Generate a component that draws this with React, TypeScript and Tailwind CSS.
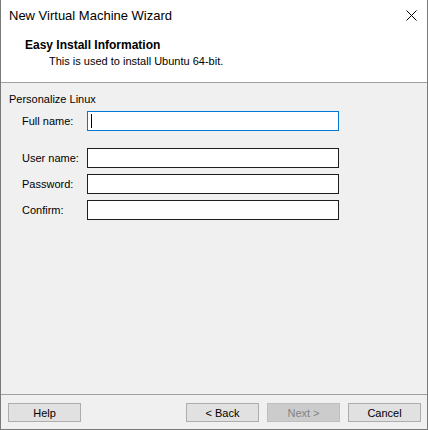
import React from 'react';

const font = { fontFamily: '"Liberation Sans", Arial, sans-serif' };

const Field: React.FC<{ label: string; focused?: boolean; className?: string }> = ({ label, focused, className }) => (
  <div className={`flex items-center ${className ?? ''}`}>
    <div className="w-[65px] text-[11px] leading-[16px] text-black">{label}</div>
    <div
      className={`relative h-[20px] w-[252px] bg-white border ${
        focused ? 'border-[#0078d7]' : 'border-[#1e1e1e]'
      }`}
    >
      {focused && <div className="absolute left-[3px] top-[2px] h-[14px] w-px bg-black" />}
    </div>
  </div>
);

const Button: React.FC<{ label: string; disabled?: boolean }> = ({ label, disabled }) => (
  <button
    className={`h-[19px] w-[73px] border text-[11px] leading-[16px] ${
      disabled
        ? 'bg-[#cccccc] border-[#bfbfbf] text-[#838383]'
        : 'bg-[#e1e1e1] border-[#adadad] text-black'
    }`}
  >
    {label}
  </button>
);

export default function App() {
  return (
    <div
      className="flex h-[430px] w-[428px] flex-col border-x border-b border-[#7a7a7a] bg-white select-none"
      style={font}
    >
      {/* title bar */}
      <div className="flex h-[31px] items-center justify-between pl-[8px] pr-[10px]">
        <span className="text-[13px] text-black">New Virtual Machine Wizard</span>
        <svg width="11" height="11" viewBox="0 0 11 11" className="mt-[-1px]">
          <path d="M0.5 0.5L10.5 10.5M10.5 0.5L0.5 10.5" stroke="#000" strokeWidth="1" />
        </svg>
      </div>

      {/* header */}
      <div className="h-[51px] pl-[24px] pt-[6px]">
        <div className="text-[12px] font-bold leading-[16px] text-black">Easy Install Information</div>
        <div className="pl-[24px] text-[11px] leading-[16px] text-black">
          This is used to install Ubuntu 64-bit.
        </div>
      </div>
      <div className="h-px bg-[#a0a0a0]" />

      {/* body */}
      <div className="flex-1 bg-[#f0f0f0] pl-[8px] pt-[8px]">
        <div className="text-[11px] leading-[16px] text-black">Personalize Linux</div>
        <div className="pl-[13px]">
          <Field label="Full name:" focused className="mt-[4px]" />
          <Field label="User name:" className="mt-[17px]" />
          <Field label="Password:" className="mt-[6px]" />
          <Field label="Confirm:" className="mt-[6px]" />
        </div>
      </div>

      {/* footer */}
      <div className="h-px bg-[#a0a0a0]" />
      <div className="flex h-[34px] items-start bg-[#f0f0f0] pl-[7px] pr-[6px] pt-[8px]">
        <Button label="Help" />
        <div className="flex-1" />
        <div className="flex gap-[8px]">
          <Button label="< Back" />
          <Button label="Next >" disabled />
          <Button label="Cancel" />
        </div>
      </div>
    </div>
  );
}
